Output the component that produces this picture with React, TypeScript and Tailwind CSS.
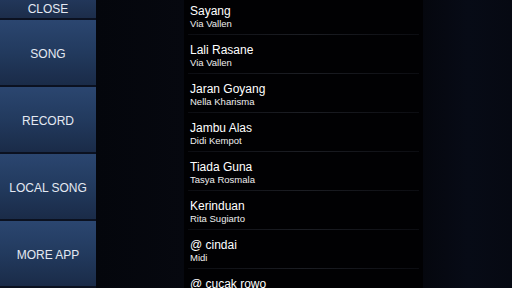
const songs = [
  { title: "Sayang", artist: "Via Vallen" },
  { title: "Lali Rasane", artist: "Via Vallen" },
  { title: "Jaran Goyang", artist: "Nella Kharisma" },
  { title: "Jambu Alas", artist: "Didi Kempot" },
  { title: "Tiada Guna", artist: "Tasya Rosmala" },
  { title: "Kerinduan", artist: "Rita Sugiarto" },
  { title: "@ cindai", artist: "Midi" },
  { title: "@ cucak rowo", artist: "Midi" },
];

const buttons = ["SONG", "RECORD", "LOCAL SONG", "MORE APP"];

export default function App() {
  return (
    <div className="w-[512px] h-[288px] overflow-hidden flex bg-[#05070d] font-['Liberation_Sans',Arial,sans-serif]">
      <div className="w-[96px] shrink-0 flex flex-col gap-[2px] bg-[#0b1120]">
        <div className="h-[18px] shrink-0 flex items-center justify-center bg-gradient-to-b from-[#22375a] to-[#1c2d4a] text-[12px] text-[#e4e9f2]">
          CLOSE
        </div>
        {buttons.map((b) => (
          <div
            key={b}
            className="h-[65px] shrink-0 flex items-center justify-center pt-[2px] bg-gradient-to-b from-[#2b4670] via-[#223a5e] to-[#1a2b48] text-[12px] text-[#e4e9f2]"
          >
            {b}
          </div>
        ))}
      </div>
      <div className="w-[88px] shrink-0 bg-gradient-to-r from-[#04060c] to-[#06080f]" />
      <div className="w-[239px] shrink-0 bg-[#010103] overflow-hidden">
        <div className="-mt-[4px] flex flex-col">
          {songs.map((s) => (
            <div key={s.title} className="h-[39px] shrink-0 flex flex-col">
              <div className="flex-1 pl-[6px] pt-[8px] flex flex-col">
                <span className="text-[12px] leading-[14px] text-white">{s.title}</span>
                <span className="text-[9.5px] leading-[11px] text-[#eeeeee]">{s.artist}</span>
              </div>
              <div className="h-[1px] mx-[4px] bg-gradient-to-r from-[#0c0d12] via-[#1c1e24] to-[#0c0d12]" />
            </div>
          ))}
        </div>
      </div>
      <div className="flex-1 bg-gradient-to-r from-[#05070e] via-[#070b16] to-[#060912]" />
    </div>
  );
}
